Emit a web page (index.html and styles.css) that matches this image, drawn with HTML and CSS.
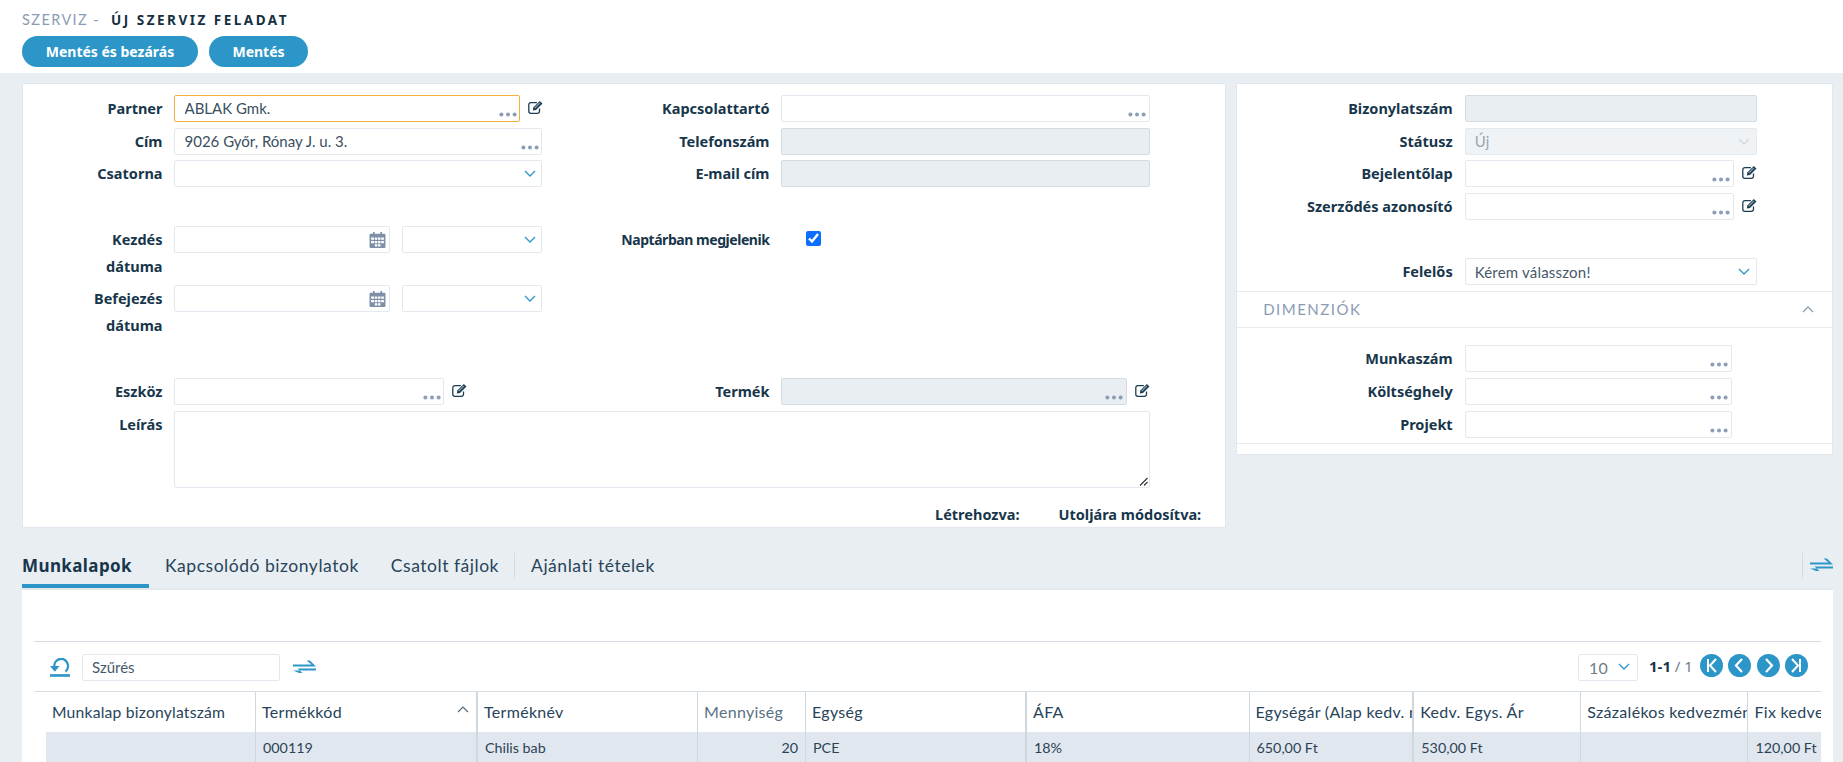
FILE: index.html
```html
<!DOCTYPE html>
<html lang="hu">
<head>
<meta charset="utf-8">
<title>Új szerviz feladat</title>
<link rel="stylesheet" href="styles.css">
</head>
<body>
<svg class="defs" width="0" height="0" aria-hidden="true">
  <symbol id="dots" viewBox="0 0 18 5"><circle cx="2.4" cy="2.5" r="2" /><circle cx="9" cy="2.5" r="2" /><circle cx="15.6" cy="2.5" r="2" /></symbol>
  <symbol id="chev" viewBox="0 0 12 7"><path d="M1 1 6 6 11 1" fill="none" stroke="currentColor" stroke-width="1.300"/></symbol>
  <symbol id="edit" viewBox="0 0 15 14"><path d="M11.500 8.500v2.700a2.100 2.100 0 0 1-2.100 2.100H2.900a2.100 2.100 0 0 1-2.100-2.100V4.700a2.100 2.100 0 0 1 2.100-2.100h6" fill="none" stroke="#1d3d53" stroke-width="1.300"/><path d="M5.300 7.400 11.800.9l2.700 2.500-6.500 6.600-3.100.5z" fill="#1d3d53"/><path d="M6.700 8.100 11.900 2.900" stroke="#8aa3b8" stroke-width="1.200"/></symbol>
  <symbol id="cal" viewBox="0 0 16 16"><path d="M1.500 2.500h2.200V1h1.600v1.500h5.400V1h1.600v1.500h2.200a1 1 0 0 1 1 1V15a1 1 0 0 1-1 1h-13a1 1 0 0 1-1-1V3.500a1 1 0 0 1 1-1z" fill="#7e8fa8"/><path d="M2 6h2.800v2.300H2zM5.500 6h2.300v2.300H5.500zM8.500 6h2.300v2.300H8.500zM11.500 6h2.500v2.300h-2.500zM2 9.300h2.800v2.300H2zM5.500 9.300h2.300v2.300H5.500zM8.500 9.300h2.300v2.300H8.500zM11.500 9.300h2.500v2.300h-2.500zM5.500 12.500h2.300v2H5.500zM8.500 12.500h2.300v2H8.500z" fill="#fff"/></symbol>
  <symbol id="swap" viewBox="0 0 23 15"><path d="M0 4.400H18.500L13.500.4h3.400L23 6.600H0zM23 8.400H4.500l5 4.600H6.100L0 10.600h23z" fill="#2d96c9"/></symbol>
</svg>

<header class="top">
  <h1 class="title"><span class="title-sub">SZERVIZ -</span><span class="title-main">ÚJ SZERVIZ FELADAT</span></h1>
  <div class="actions">
    <button class="btn btn-wide">Mentés és bezárás</button>
    <button class="btn">Mentés</button>
  </div>
</header>

<main class="content">
  <div class="cards">
    <section class="card card-left">
      <div class="form-grid">
        <label class="lbl">Partner</label>
        <div class="with-edit">
          <div class="field focus"><input class="inp" value="ABLAK Gmk."><svg class="dots"><use href="#dots"/></svg></div>
          <svg class="edit"><use href="#edit"/></svg>
        </div>
        <label class="lbl">Kapcsolattartó</label>
        <div class="field"><input class="inp"><svg class="dots"><use href="#dots"/></svg></div>

        <label class="lbl">Cím</label>
        <div class="field narrow"><input class="inp" value="9026 Győr, Rónay J. u. 3."><svg class="dots"><use href="#dots"/></svg></div>
        <label class="lbl">Telefonszám</label>
        <div class="field off"></div>

        <label class="lbl">Csatorna</label>
        <div class="field narrow"><svg class="chev"><use href="#chev"/></svg></div>
        <label class="lbl">E-mail cím</label>
        <div class="field off"></div>

        <div class="blank"></div>

        <label class="lbl">Kezdés<br>dátuma</label>
        <div class="date-time">
          <div class="field date"><svg class="cal"><use href="#cal"/></svg></div>
          <div class="field time"><svg class="chev"><use href="#chev"/></svg></div>
        </div>
        <label class="lbl tight">Naptárban megjelenik</label>
        <div class="check-cell"><input class="check" type="checkbox" checked></div>

        <label class="lbl">Befejezés<br>dátuma</label>
        <div class="date-time">
          <div class="field date"><svg class="cal"><use href="#cal"/></svg></div>
          <div class="field time"><svg class="chev"><use href="#chev"/></svg></div>
        </div>
        <div class="span2"></div>

        <div class="blank"></div>

        <label class="lbl">Eszköz</label>
        <div class="with-edit short">
          <div class="field"><input class="inp"><svg class="dots"><use href="#dots"/></svg></div>
          <svg class="edit"><use href="#edit"/></svg>
        </div>
        <label class="lbl">Termék</label>
        <div class="with-edit">
          <div class="field off"><svg class="dots"><use href="#dots"/></svg></div>
          <svg class="edit"><use href="#edit"/></svg>
        </div>

        <label class="lbl">Leírás</label>
        <div class="field area"><svg class="grip" viewBox="0 0 9 9"><path d="M1 8.500 8.500 1M5 8.500 8.500 5" stroke="#333" stroke-width="1.100"/></svg></div>
      </div>
      <div class="meta">
        <span>Létrehozva:</span>
        <span>Utoljára módosítva:</span>
      </div>
    </section>

    <section class="card card-right">
      <div class="side-grid">
        <label class="lbl">Bizonylatszám</label>
        <div class="field off"></div>
        <label class="lbl">Státusz</label>
        <div class="field off2"><span class="val dim">Új</span><svg class="chev faint"><use href="#chev"/></svg></div>
        <label class="lbl">Bejelentőlap</label>
        <div class="with-edit">
          <div class="field"><svg class="dots"><use href="#dots"/></svg></div>
          <svg class="edit"><use href="#edit"/></svg>
        </div>
        <label class="lbl">Szerződés azonosító</label>
        <div class="with-edit">
          <div class="field"><svg class="dots"><use href="#dots"/></svg></div>
          <svg class="edit"><use href="#edit"/></svg>
        </div>
        <div class="blank"></div>
        <label class="lbl">Felelős</label>
        <div class="field"><span class="val">Kérem válasszon!</span><svg class="chev"><use href="#chev"/></svg></div>
      </div>
      <div class="dim-head">
        <span>DIMENZIÓK</span>
        <svg class="chev-up" viewBox="0 0 12 7"><path d="M1 6 6 1l5 5" fill="none" stroke="#8fa0b6" stroke-width="1.300"/></svg>
      </div>
      <div class="dim-grid">
        <label class="lbl">Munkaszám</label>
        <div class="field"><svg class="dots"><use href="#dots"/></svg></div>
        <label class="lbl">Költséghely</label>
        <div class="field"><svg class="dots"><use href="#dots"/></svg></div>
        <label class="lbl">Projekt</label>
        <div class="field"><svg class="dots"><use href="#dots"/></svg></div>
      </div>
    </section>
  </div>

  <nav class="tabs">
    <a class="tab active">Munkalapok</a>
    <a class="tab">Kapcsolódó bizonylatok</a>
    <a class="tab">Csatolt fájlok</a>
    <span class="tab-sep"></span>
    <a class="tab">Ajánlati tételek</a>
    <div class="tabs-end">
      <span class="tab-sep"></span>
      <svg class="swap"><use href="#swap"/></svg>
    </div>
  </nav>

  <section class="panel">
    <div class="toolbar">
      <svg class="refresh" viewBox="0 0 20 18" preserveAspectRatio="none"><path d="M4.500 9A6.800 6.800 0 1 1 15.500 12.800" fill="none" stroke="#2d96c9" stroke-width="2.300"/><path d="M0 7.500h9.500l-4.700 5.500z" fill="#2d96c9"/><path d="M0 15.300h20v2.500H0z" fill="#2d96c9"/></svg>
      <div class="field filter"><input class="inp" value="Szűrés"></div>
      <svg class="swap"><use href="#swap"/></svg>
      <div class="pager">
        <div class="field size"><span class="val">10</span><svg class="chev"><use href="#chev"/></svg></div>
        <span class="count"><b>1-1</b> / 1</span>
        <span class="circle"><svg viewBox="0 0 23 23"><path d="M8 5v13M16 5l-6 6.500 6 6.500" fill="none" stroke="#fff" stroke-width="2"/></svg></span>
        <span class="circle"><svg viewBox="0 0 23 23"><path d="M14 5l-6 6.500 6 6.500" fill="none" stroke="#fff" stroke-width="2.200"/></svg></span>
        <span class="circle"><svg viewBox="0 0 23 23"><path d="M9 5l6 6.500-6 6.500" fill="none" stroke="#fff" stroke-width="2.200"/></svg></span>
        <span class="circle"><svg viewBox="0 0 23 23"><path d="M15 5v13M7 5l6 6.500-6 6.500" fill="none" stroke="#fff" stroke-width="2"/></svg></span>
      </div>
    </div>
    <div class="table-wrap">
      <table class="tbl">
        <colgroup>
          <col class="c1"><col class="c2"><col class="c3"><col class="c4"><col class="c5"><col class="c6"><col class="c7"><col class="c8"><col class="c9"><col class="c10">
        </colgroup>
        <thead>
          <tr>
            <th class="first">Munkalap bizonylatszám</th>
            <th class="sorted">Termékkód<svg class="sort" viewBox="0 0 12 7"><path d="M1 6 6 1l5 5" fill="none" stroke="#55697d" stroke-width="1.200"/></svg></th>
            <th class="thick">Terméknév</th>
            <th class="muted">Mennyiség</th>
            <th>Egység</th>
            <th class="thick">ÁFA</th>
            <th>Egységár (Alap kedv. nélkül)</th>
            <th class="thick">Kedv. Egys. Ár</th>
            <th>Százalékos kedvezmény</th>
            <th>Fix kedvezmény</th>
          </tr>
        </thead>
        <tbody>
          <tr>
            <td></td><td>000119</td><td class="thick">Chilis bab</td><td class="num">20</td><td>PCE</td><td class="thick">18%</td><td>650,00 Ft</td><td class="thick">530,00 Ft</td><td></td><td>120,00 Ft</td>
          </tr>
        </tbody>
      </table>
    </div>
  </section>
</main>
</body>
</html>
```

FILE: styles.css
```css
* { box-sizing: border-box; }
html, body { margin: 0; height: 762px; overflow: hidden; }
body {
  background: #e9eef2;
  color: #1b3a50;
  font-family: "Lato", "Noto Sans", sans-serif;
  font-size: 15px;
}
.defs { position: absolute; }

/* header */
.top { background: #fff; height: 73px; padding: 11px 22px 0; }
.title { margin: 0; height: 25px; display: flex; gap: 11px; font-size: 14.5px; font-weight: 400; line-height: 18px; }
.title-sub { color: #8a9bb3; letter-spacing: 1.4px; }
.title-main { font-family: "Noto Sans", sans-serif; font-weight: 700; font-size: 13.5px; letter-spacing: 2.500px; color: #15303f; }
.actions { display: flex; gap: 11px; }
.btn {
  width: 99px; height: 31px; border: 0; border-radius: 16px; background: #2d96c9; color: #fff;
  font-family: "Noto Sans", sans-serif; font-weight: 700; font-size: 14px; padding: 0;
}
.btn-wide { width: 176px; }

.content { padding: 10px 10px 0 22px; }
.cards { display: flex; gap: 10px; align-items: flex-start; }
.card { background: #fff; border: 1px solid #e1e7ec; border-radius: 1px; }
.card-left { width: 1204.500px; height: 445px; padding-top: 11px; }
.card-right { width: 597px; height: 372px; padding-top: 11px; }

/* form grids */
.form-grid {
  display: grid;
  grid-template-columns: 139.500px 369px 215px 368.500px;
  column-gap: 11.500px; row-gap: 5.700px;
}
.side-grid {
  display: grid;
  grid-template-columns: 215.500px 292px;
  column-gap: 12px; row-gap: 5.700px;
}
.dim-grid {
  display: grid;
  grid-template-columns: 215.500px 267px;
  column-gap: 12px; row-gap: 6px;
  padding: 17.500px 0 5px;
  border-bottom: 1px solid #e6ebef;
}
.lbl {
  font-family: "Noto Sans", sans-serif; font-weight: 700; font-size: 14.500px; line-height: 27px;
  text-align: right; color: #17364b; white-space: nowrap;
}
.lbl.tight { font-size: 14px; letter-spacing: -0.45px; }
.blank { grid-column: 1 / -1; height: 27px; }
.span2 { grid-column: span 2; }

.field {
  position: relative; height: 27px; flex: 1; min-width: 0;
  background: #fff; border: 1px solid #e3e9ef; border-radius: 2px;
  display: flex; align-items: center;
}
.field.narrow { width: 368px; }
.field.focus { border-color: #f2b13c; }
.field.off { background: #e9eef2; border-color: #d3dbe3; }
.field.off2 { background: #eff3f6; border-color: #e3e9ef; }
.field.area { grid-column: 2 / -1; height: 77.500px; }
.inp {
  border: 0; outline: 0; background: transparent; width: 100%; height: 100%; padding: 0 9.500px 1px;
  font: 15px "Lato", sans-serif; color: #3a4f60;
}
.val { padding-left: 9px; font-size: 15px; letter-spacing: 0.200px; color: #46596a; }
.val.dim { color: #9aa6b0; }
.dots { position: absolute; right: 2.500px; bottom: 4px; width: 18px; height: 5px; fill: #8c9db6; }
.chev { position: absolute; right: 5.500px; top: 9px; width: 12px; height: 7px; color: #2d96c9; }
.chev.faint { color: #cdd6de; }
.cal { position: absolute; right: 3.500px; top: 4px; width: 17px; height: 17px; }
.grip { position: absolute; right: 1px; bottom: 1px; width: 9px; height: 9px; }

.with-edit { display: flex; align-items: flex-start; gap: 8px; }
.edit { width: 15px; height: 14px; flex: none; margin-top: 5px; }
.short { width: 293px; }
.date-time { display: flex; gap: 12px; align-items: flex-start; width: 368px; }
.date { flex: 0 0 216px; }
.time { flex: 0 0 140px; }
.check-cell { padding: 5px 0 0 24.500px; height: 27px; }
.check { width: 15px; height: 15px; margin: 0; accent-color: #0d6efd; display: block; }

.meta {
  display: flex; justify-content: flex-end; gap: 39px; margin-top: 15px; padding-right: 24px;
  font-family: "Noto Sans", sans-serif; font-weight: 700; font-size: 14.500px; line-height: 22px; color: #17364b;
}

.dim-head {
  height: 37px; margin-top: 5.500px; padding: 0 18px 0 26px;
  border-top: 1px solid #e6ebef; border-bottom: 1px solid #e6ebef;
  display: flex; align-items: center; justify-content: space-between;
  color: #8a9bb3; font-size: 15px; letter-spacing: 1.500px;
}
.chev-up { width: 12px; height: 7px; }

/* tabs */
.tabs { display: flex; align-items: flex-start; height: 60px; padding-top: 25px; }
.tab { height: 35px; line-height: 26px; font-size: 17.500px; letter-spacing: 0.530px; color: #27445a; margin-right: 32px; }
.tab.active { font-family: "Noto Sans", sans-serif; font-weight: 700; font-size: 17px; letter-spacing: 0.400px; color: #17364b; border-bottom: 4px solid #2d96c9; width: 127px; margin-right: 16px; }
.tab-sep { width: 1px; height: 25px; background: #d3dbe3; margin-right: 16px; margin-left: -17px; }
.tabs-end { margin-left: auto; display: flex; align-items: center; height: 25px; gap: 7px; }
.tabs-end .swap { margin-top: -1px; }
.tabs-end .tab-sep { margin: 0; }

/* panel */
.panel { background: #fff; height: 174px; padding: 51px 12px 0 12px; border-top: 2px solid #e3e8ed; }
.toolbar { display: flex; align-items: center; border-top: 1px solid #d5dce3; border-bottom: 1px solid #d5dce3; height: 51px; padding: 2px 0 0 16px; }
.refresh { width: 20px; height: 19px; flex: none; }
.filter { flex: 0 0 198px; margin-left: 12px; }
.filter .inp { color: #46596a; padding-left: 9px; }
.swap { width: 23px; height: 15px; flex: none; }
.toolbar .swap { margin-left: 13px; }
.pager { margin-left: auto; display: flex; align-items: center; padding-right: 13px; }
.size { flex: 0 0 60px; }
.size .val { padding-left: 10px; color: #6c7d8c; font-size: 16px; }
.size .chev { right: 7px; top: 8px; }
.count { margin: 0 3px 0 11px; width: 42px; font-family: "Noto Sans", sans-serif; font-size: 15px; color: #6d7d8c; white-space: nowrap; position: relative; top: -2px; }
.count b { color: #17364b; }
.circle { width: 23px; height: 23px; border-radius: 50%; background: #2d96c9; margin-left: 5.500px; position: relative; top: -2px; }
.circle svg { display: block; width: 23px; height: 23px; }

/* table */
.table-wrap { padding-left: 12px; overflow: hidden; width: 100%; }
.tbl { border-collapse: collapse; table-layout: fixed; width: 1822px; }
.c1 { width: 209.500px; } .c2 { width: 221.500px; } .c3 { width: 220.500px; } .c4 { width: 108px; }
.c5 { width: 220.500px; } .c6 { width: 223px; } .c7 { width: 164.300px; } .c8 { width: 167.500px; }
.c9 { width: 167.200px; } .c10 { width: 150px; }
.tbl th {
  height: 40px; padding: 0 0 1px 6px; text-align: left; font-weight: 400; font-size: 16px; letter-spacing: 0.300px;
  color: #27445a; white-space: nowrap; overflow: hidden; position: relative;
  border-left: 1px solid #cfd7df;
}
.tbl th:first-child, .tbl td:first-child { border-left: 0; }
.tbl th.first { font-size: 15.700px; letter-spacing: 0.200px; }
.tbl th.thick, .tbl td.thick { border-left: 2px solid #cfd7df; }
.tbl th.muted { color: #5a7084; }
.sort { position: absolute; right: 7px; top: 14px; width: 12px; height: 7px; }
.tbl td {
  height: 30px; padding: 0 7px; background: #e1e7ee; font-size: 14.300px; color: #2c4356;
  border-left: 1px solid #cfd7df; white-space: nowrap; overflow: hidden;
}
.tbl td.num { text-align: right; }
```
